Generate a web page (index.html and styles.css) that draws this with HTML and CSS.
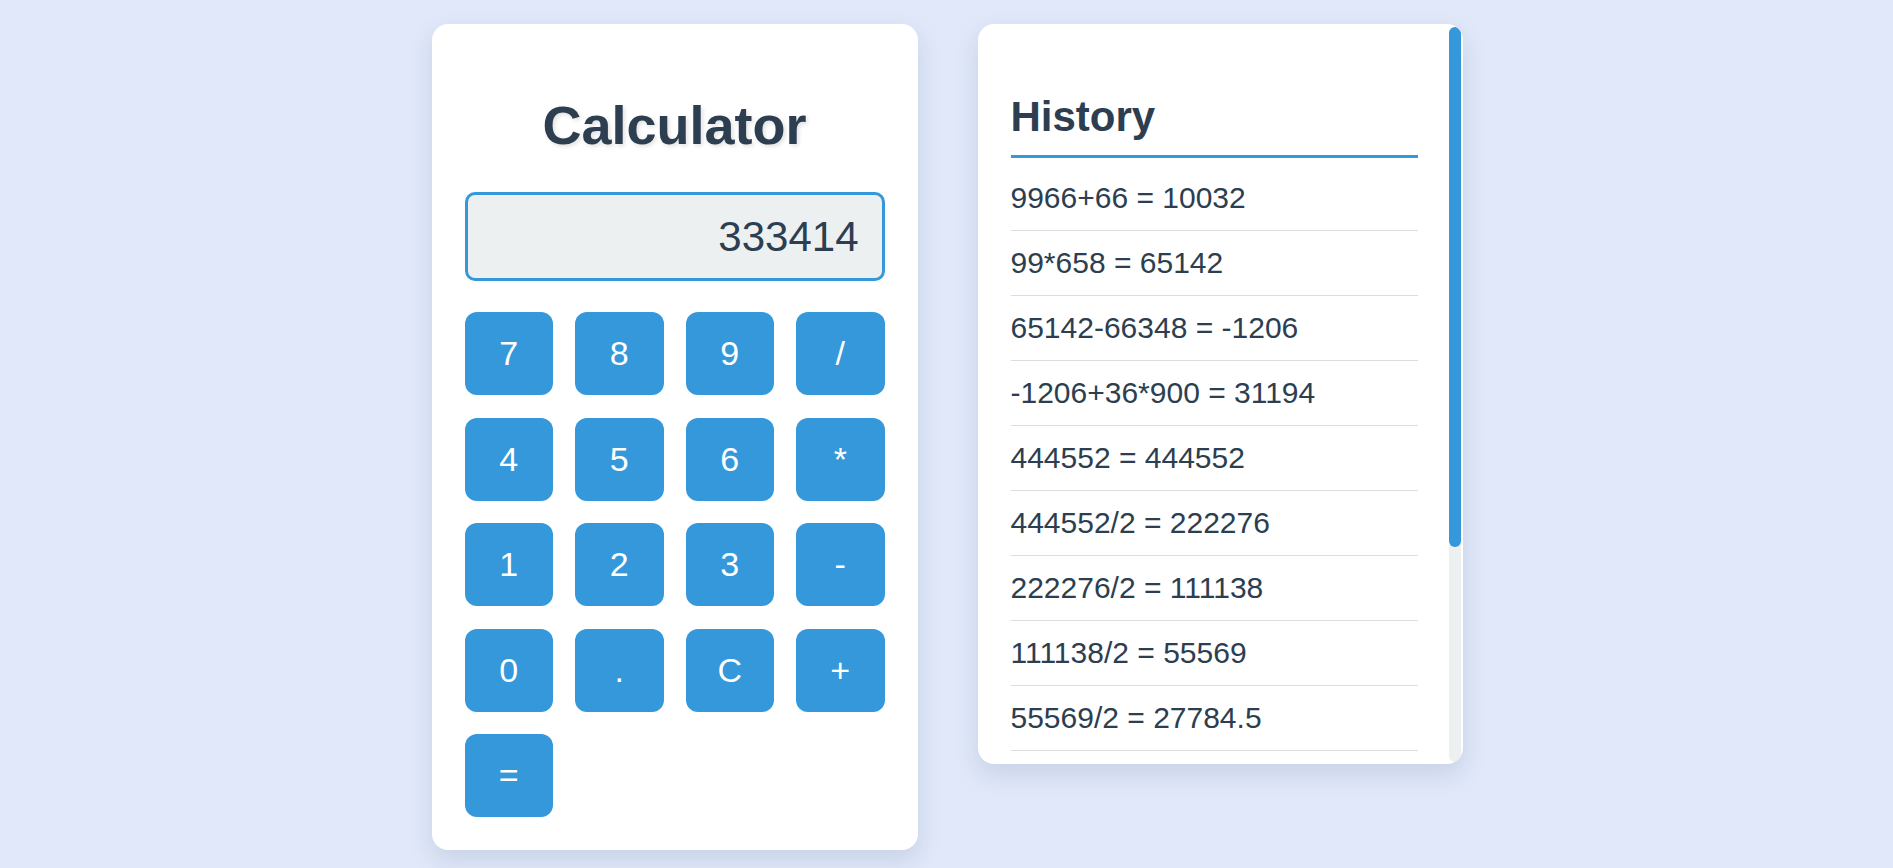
FILE: index.html
```html
<!DOCTYPE html>
<html lang="en">
<head>
<meta charset="utf-8">
<title>Calculator</title>
<link rel="stylesheet" href="styles.css">
</head>
<body>
<main class="layout">
  <section class="card calc">
    <h1 class="calc-title">Calculator</h1>
    <div class="display">333414</div>
    <div class="keys">
      <button class="key">7</button>
      <button class="key">8</button>
      <button class="key">9</button>
      <button class="key">/</button>
      <button class="key">4</button>
      <button class="key">5</button>
      <button class="key">6</button>
      <button class="key">*</button>
      <button class="key">1</button>
      <button class="key">2</button>
      <button class="key">3</button>
      <button class="key">-</button>
      <button class="key">0</button>
      <button class="key">.</button>
      <button class="key">C</button>
      <button class="key">+</button>
      <button class="key">=</button>
    </div>
  </section>
  <section class="card history">
    <div class="history-scroll">
      <h2 class="history-title">History</h2>
      <ul class="history-list">
        <li class="history-item">9966+66 = 10032</li>
        <li class="history-item">99*658 = 65142</li>
        <li class="history-item">65142-66348 = -1206</li>
        <li class="history-item">-1206+36*900 = 31194</li>
        <li class="history-item">444552 = 444552</li>
        <li class="history-item">444552/2 = 222276</li>
        <li class="history-item">222276/2 = 111138</li>
        <li class="history-item">111138/2 = 55569</li>
        <li class="history-item">55569/2 = 27784.5</li>
        <li class="history-item">27784.5*12 = 333414</li>
        <li class="history-item">333414 = 333414</li>
        <li class="history-item">333414-0 = 333414</li>
        <li class="history-item">333414+0 = 333414</li>
      </ul>
    </div>
    <div class="scrollbar" aria-hidden="true">
      <div class="scrollbar-thumb"></div>
    </div>
  </section>
</main>
</body>
</html>
```
FILE: styles.css
```css
* {
  box-sizing: border-box;
}

html, body {
  margin: 0;
  padding: 0;
}

body {
  background: #e0e8f9;
  font-family: "Liberation Sans", Arial, sans-serif;
  color: #2c3e50;
  min-height: 868px;
  overflow: hidden;
}

.layout {
  display: flex;
  justify-content: center;
  align-items: flex-start;
  gap: 60px;
  padding-top: 24px;
  padding-left: 1px;
}

.card {
  background: #ffffff;
  border-radius: 16px;
  box-shadow: 0 10px 25px rgba(40, 60, 110, 0.13);
}

.calc {
  width: 486px;
  padding: 33px 33px 33px;
}

.calc-title {
  margin: 37px 0 36px;
  font-size: 54px;
  line-height: 62px;
  font-weight: 700;
  text-align: center;
  color: #2c3e50;
  text-shadow: 2px 2px 4px rgba(0, 0, 0, 0.12);
}

.display {
  height: 89px;
  border: 3px solid #3498db;
  border-radius: 10px;
  background: #ecf0f1;
  display: flex;
  align-items: center;
  justify-content: flex-end;
  padding: 0 23px;
  font-size: 42px;
  color: #2c3e50;
  margin-bottom: 31px;
}

.keys {
  display: grid;
  grid-template-columns: repeat(4, 1fr);
  column-gap: 22px;
  row-gap: 22.5px;
}

.key {
  height: 83px;
  border: none;
  border-radius: 12px;
  background: #3498db;
  color: #ffffff;
  font-family: "Liberation Sans", Arial, sans-serif;
  font-size: 34px;
  padding: 0;
  cursor: pointer;
}

.history {
  position: relative;
  width: 485px;
  height: 740px;
  overflow: hidden;
}

.history-scroll {
  height: 100%;
  overflow: hidden;
  padding: 33px 45px 33px 33px;
}

.scrollbar {
  position: absolute;
  top: 3px;
  bottom: 2px;
  right: 2px;
  width: 12px;
  background: #ecf0f1;
  border-radius: 6px;
}

.scrollbar-thumb {
  height: 520px;
  background: #3498db;
  border-radius: 6px;
}

.history-title {
  margin: 36px 0 8px;
  font-size: 42px;
  line-height: 48px;
  font-weight: 700;
  color: #2c3e50;
  padding-bottom: 14px;
  border-bottom: 3px solid #3498db;
}

.history-list {
  list-style: none;
  margin: 0;
  padding: 0;
}

.history-item {
  font-size: 30px;
  line-height: 34px;
  padding: 15px 0;
  border-bottom: 1px solid #dddddd;
  color: #2c3e50;
}
```
